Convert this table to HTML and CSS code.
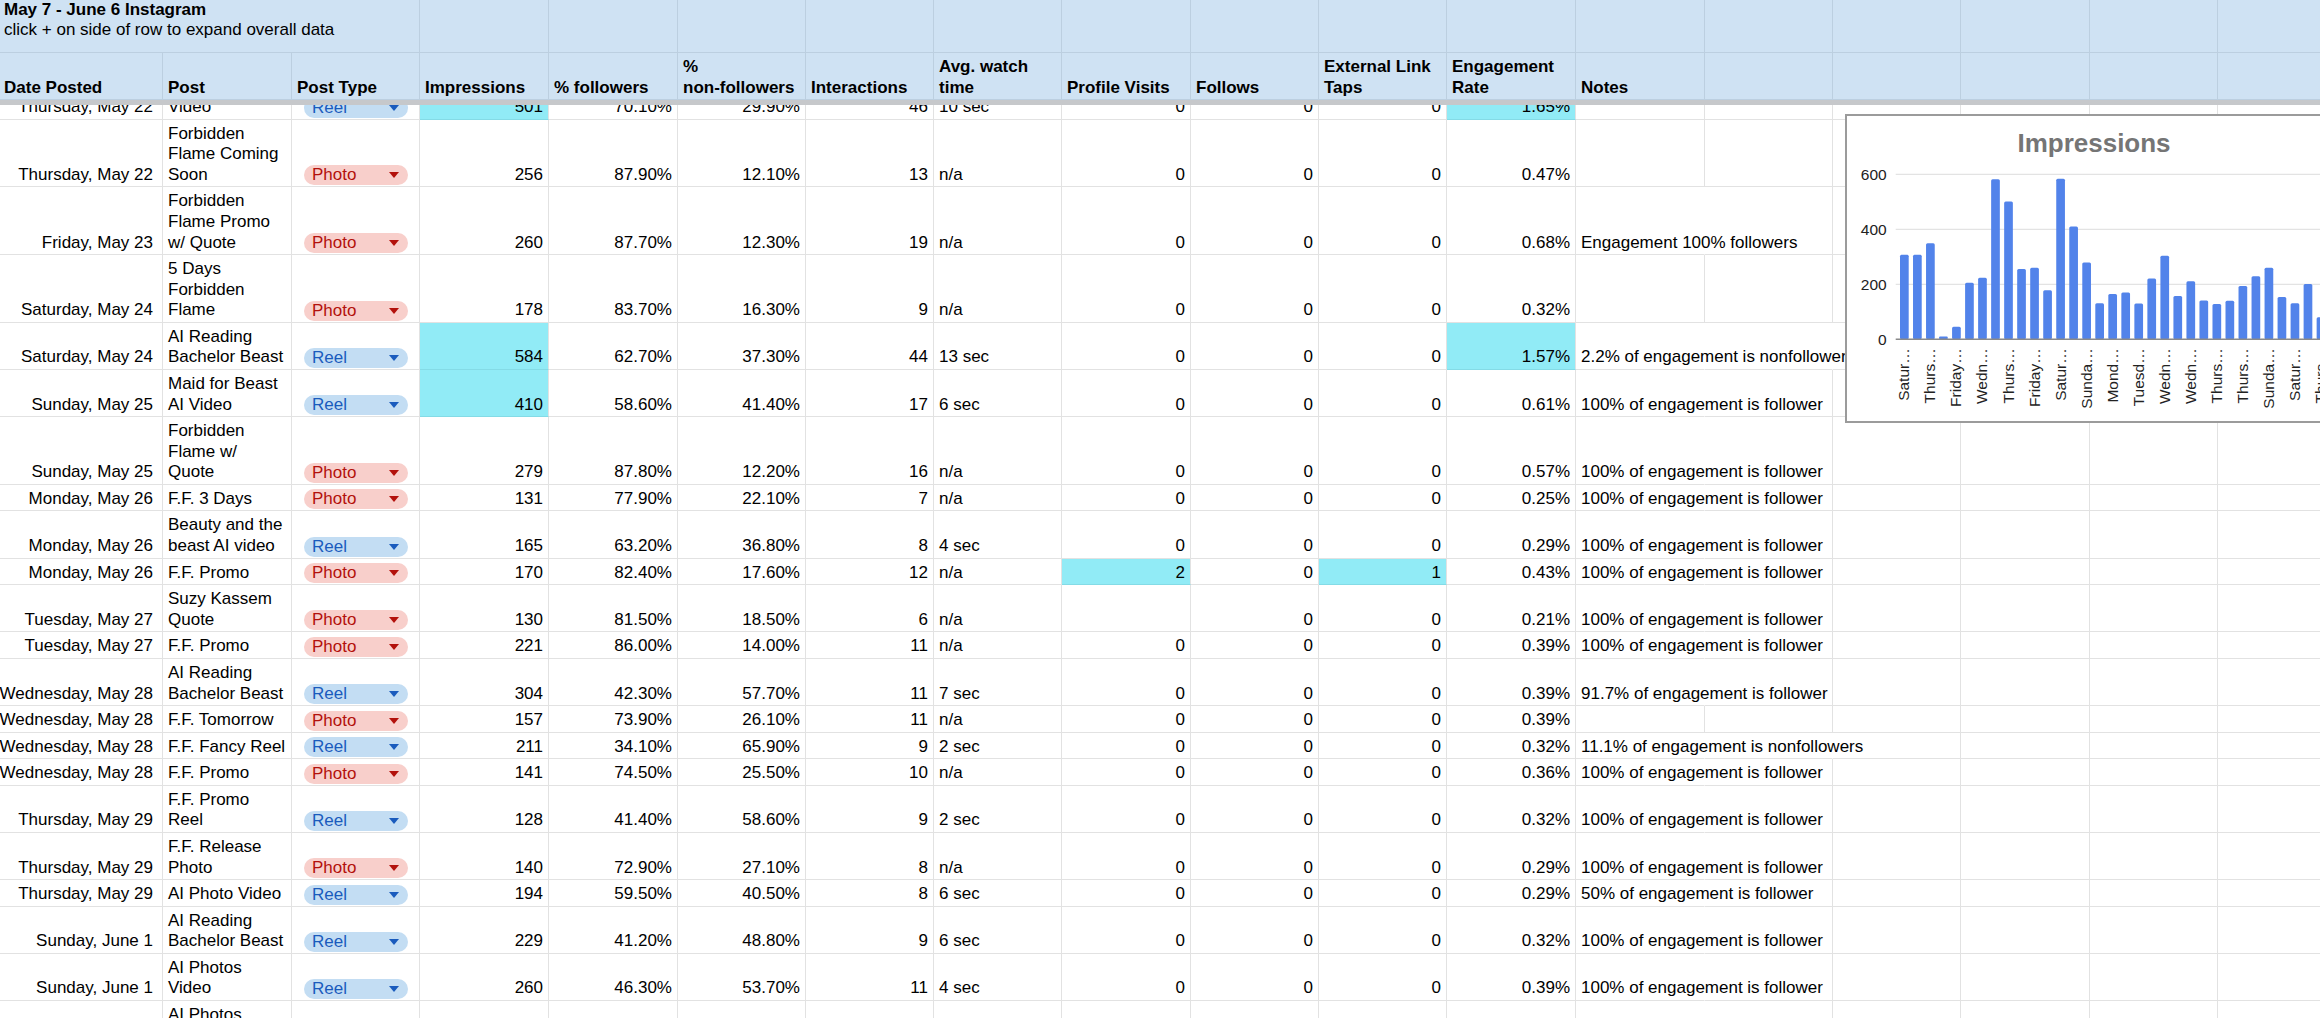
FILE: index.html
```html
<!DOCTYPE html>
<html lang="en">
<head>
<meta charset="utf-8">
<title>May 7 - June 6 Instagram</title>
<link rel="stylesheet" href="styles.css">
</head>
<body>
<div class="sheet">
  <div class="row head top">
    <div class="title"><strong>May 7 - June 6 Instagram</strong><span>click + on side of row to expand overall data</span></div>
    <div></div><div></div><div></div><div></div><div></div><div></div><div></div><div></div><div></div><div></div><div></div><div></div><div></div><div></div><div></div>
  </div>
  <div class="row head labels">
    <div>Date Posted</div><div>Post</div><div>Post Type</div><div>Impressions</div><div>% followers</div><div><span>% <span class="nw">non-followers</span></span></div><div>Interactions</div><div>Avg. watch time</div><div>Profile Visits</div><div>Follows</div><div>External Link Taps</div><div>Engagement Rate</div><div>Notes</div>
    <div></div><div></div><div></div><div></div><div></div>
  </div>
  <div class="freeze"></div>
  <div class="body">
    <div class="rows">
      <div class="row">
        <div class="d">Thursday, May 22</div><div class="t">Bachelor Beast Video</div><div class="p"><span class="pill reel">Reel</span></div>
        <div class="n hl">501</div><div class="n">70.10%</div><div class="n">29.90%</div><div class="n">46</div><div class="t">10 sec</div>
        <div class="n">0</div><div class="n">0</div><div class="n">0</div><div class="n hl">1.65%</div>
        <div></div><div></div><div></div><div></div><div></div><div></div>
      </div>
      <div class="row">
        <div class="d">Thursday, May 22</div><div class="t">Forbidden Flame Coming Soon</div><div class="p"><span class="pill photo">Photo</span></div>
        <div class="n">256</div><div class="n">87.90%</div><div class="n">12.10%</div><div class="n">13</div><div class="t">n/a</div>
        <div class="n">0</div><div class="n">0</div><div class="n">0</div><div class="n">0.47%</div>
        <div></div><div></div><div></div><div></div><div></div><div></div>
      </div>
      <div class="row">
        <div class="d">Friday, May 23</div><div class="t">Forbidden Flame Promo w/ Quote</div><div class="p"><span class="pill photo">Photo</span></div>
        <div class="n">260</div><div class="n">87.70%</div><div class="n">12.30%</div><div class="n">19</div><div class="t">n/a</div>
        <div class="n">0</div><div class="n">0</div><div class="n">0</div><div class="n">0.68%</div>
        <div class="note">Engagement 100% followers</div><div></div><div></div><div></div><div></div><div></div>
      </div>
      <div class="row">
        <div class="d">Saturday, May 24</div><div class="t">5 Days Forbidden Flame</div><div class="p"><span class="pill photo">Photo</span></div>
        <div class="n">178</div><div class="n">83.70%</div><div class="n">16.30%</div><div class="n">9</div><div class="t">n/a</div>
        <div class="n">0</div><div class="n">0</div><div class="n">0</div><div class="n">0.32%</div>
        <div></div><div></div><div></div><div></div><div></div><div></div>
      </div>
      <div class="row">
        <div class="d">Saturday, May 24</div><div class="t">AI Reading Bachelor Beast</div><div class="p"><span class="pill reel">Reel</span></div>
        <div class="n hl">584</div><div class="n">62.70%</div><div class="n">37.30%</div><div class="n">44</div><div class="t">13 sec</div>
        <div class="n">0</div><div class="n">0</div><div class="n">0</div><div class="n hl">1.57%</div>
        <div class="note">2.2% of engagement is nonfollower</div><div class="nb"></div><div></div><div></div><div></div><div></div>
      </div>
      <div class="row">
        <div class="d">Sunday, May 25</div><div class="t">Maid for Beast AI Video</div><div class="p"><span class="pill reel">Reel</span></div>
        <div class="n hl">410</div><div class="n">58.60%</div><div class="n">41.40%</div><div class="n">17</div><div class="t">6 sec</div>
        <div class="n">0</div><div class="n">0</div><div class="n">0</div><div class="n">0.61%</div>
        <div class="note">100% of engagement is follower</div><div></div><div></div><div></div><div></div><div></div>
      </div>
      <div class="row">
        <div class="d">Sunday, May 25</div><div class="t">Forbidden Flame w/ Quote</div><div class="p"><span class="pill photo">Photo</span></div>
        <div class="n">279</div><div class="n">87.80%</div><div class="n">12.20%</div><div class="n">16</div><div class="t">n/a</div>
        <div class="n">0</div><div class="n">0</div><div class="n">0</div><div class="n">0.57%</div>
        <div class="note">100% of engagement is follower</div><div></div><div></div><div></div><div></div><div></div>
      </div>
      <div class="row">
        <div class="d">Monday, May 26</div><div class="t">F.F. 3 Days</div><div class="p"><span class="pill photo">Photo</span></div>
        <div class="n">131</div><div class="n">77.90%</div><div class="n">22.10%</div><div class="n">7</div><div class="t">n/a</div>
        <div class="n">0</div><div class="n">0</div><div class="n">0</div><div class="n">0.25%</div>
        <div class="note">100% of engagement is follower</div><div></div><div></div><div></div><div></div><div></div>
      </div>
      <div class="row">
        <div class="d">Monday, May 26</div><div class="t">Beauty and the beast AI video</div><div class="p"><span class="pill reel">Reel</span></div>
        <div class="n">165</div><div class="n">63.20%</div><div class="n">36.80%</div><div class="n">8</div><div class="t">4 sec</div>
        <div class="n">0</div><div class="n">0</div><div class="n">0</div><div class="n">0.29%</div>
        <div class="note">100% of engagement is follower</div><div></div><div></div><div></div><div></div><div></div>
      </div>
      <div class="row">
        <div class="d">Monday, May 26</div><div class="t">F.F. Promo</div><div class="p"><span class="pill photo">Photo</span></div>
        <div class="n">170</div><div class="n">82.40%</div><div class="n">17.60%</div><div class="n">12</div><div class="t">n/a</div>
        <div class="n hl">2</div><div class="n">0</div><div class="n hl">1</div><div class="n">0.43%</div>
        <div class="note">100% of engagement is follower</div><div></div><div></div><div></div><div></div><div></div>
      </div>
      <div class="row">
        <div class="d">Tuesday, May 27</div><div class="t">Suzy Kassem Quote</div><div class="p"><span class="pill photo">Photo</span></div>
        <div class="n">130</div><div class="n">81.50%</div><div class="n">18.50%</div><div class="n">6</div><div class="t">n/a</div>
        <div class="n"></div><div class="n">0</div><div class="n">0</div><div class="n">0.21%</div>
        <div class="note">100% of engagement is follower</div><div></div><div></div><div></div><div></div><div></div>
      </div>
      <div class="row">
        <div class="d">Tuesday, May 27</div><div class="t">F.F. Promo</div><div class="p"><span class="pill photo">Photo</span></div>
        <div class="n">221</div><div class="n">86.00%</div><div class="n">14.00%</div><div class="n">11</div><div class="t">n/a</div>
        <div class="n">0</div><div class="n">0</div><div class="n">0</div><div class="n">0.39%</div>
        <div class="note">100% of engagement is follower</div><div></div><div></div><div></div><div></div><div></div>
      </div>
      <div class="row">
        <div class="d">Wednesday, May 28</div><div class="t">AI Reading Bachelor Beast</div><div class="p"><span class="pill reel">Reel</span></div>
        <div class="n">304</div><div class="n">42.30%</div><div class="n">57.70%</div><div class="n">11</div><div class="t">7 sec</div>
        <div class="n">0</div><div class="n">0</div><div class="n">0</div><div class="n">0.39%</div>
        <div class="note">91.7% of engagement is follower</div><div></div><div></div><div></div><div></div><div></div>
      </div>
      <div class="row">
        <div class="d">Wednesday, May 28</div><div class="t">F.F. Tomorrow</div><div class="p"><span class="pill photo">Photo</span></div>
        <div class="n">157</div><div class="n">73.90%</div><div class="n">26.10%</div><div class="n">11</div><div class="t">n/a</div>
        <div class="n">0</div><div class="n">0</div><div class="n">0</div><div class="n">0.39%</div>
        <div></div><div></div><div></div><div></div><div></div><div></div>
      </div>
      <div class="row">
        <div class="d">Wednesday, May 28</div><div class="t">F.F. Fancy Reel</div><div class="p"><span class="pill reel">Reel</span></div>
        <div class="n">211</div><div class="n">34.10%</div><div class="n">65.90%</div><div class="n">9</div><div class="t">2 sec</div>
        <div class="n">0</div><div class="n">0</div><div class="n">0</div><div class="n">0.32%</div>
        <div class="note">11.1% of engagement is nonfollowers</div><div class="nb"></div><div></div><div></div><div></div><div></div>
      </div>
      <div class="row">
        <div class="d">Wednesday, May 28</div><div class="t">F.F. Promo</div><div class="p"><span class="pill photo">Photo</span></div>
        <div class="n">141</div><div class="n">74.50%</div><div class="n">25.50%</div><div class="n">10</div><div class="t">n/a</div>
        <div class="n">0</div><div class="n">0</div><div class="n">0</div><div class="n">0.36%</div>
        <div class="note">100% of engagement is follower</div><div></div><div></div><div></div><div></div><div></div>
      </div>
      <div class="row">
        <div class="d">Thursday, May 29</div><div class="t">F.F. Promo Reel</div><div class="p"><span class="pill reel">Reel</span></div>
        <div class="n">128</div><div class="n">41.40%</div><div class="n">58.60%</div><div class="n">9</div><div class="t">2 sec</div>
        <div class="n">0</div><div class="n">0</div><div class="n">0</div><div class="n">0.32%</div>
        <div class="note">100% of engagement is follower</div><div></div><div></div><div></div><div></div><div></div>
      </div>
      <div class="row">
        <div class="d">Thursday, May 29</div><div class="t">F.F. Release Photo</div><div class="p"><span class="pill photo">Photo</span></div>
        <div class="n">140</div><div class="n">72.90%</div><div class="n">27.10%</div><div class="n">8</div><div class="t">n/a</div>
        <div class="n">0</div><div class="n">0</div><div class="n">0</div><div class="n">0.29%</div>
        <div class="note">100% of engagement is follower</div><div></div><div></div><div></div><div></div><div></div>
      </div>
      <div class="row">
        <div class="d">Thursday, May 29</div><div class="t">AI Photo Video</div><div class="p"><span class="pill reel">Reel</span></div>
        <div class="n">194</div><div class="n">59.50%</div><div class="n">40.50%</div><div class="n">8</div><div class="t">6 sec</div>
        <div class="n">0</div><div class="n">0</div><div class="n">0</div><div class="n">0.29%</div>
        <div class="note">50% of engagement is follower</div><div></div><div></div><div></div><div></div><div></div>
      </div>
      <div class="row">
        <div class="d">Sunday, June 1</div><div class="t">AI Reading Bachelor Beast</div><div class="p"><span class="pill reel">Reel</span></div>
        <div class="n">229</div><div class="n">41.20%</div><div class="n">48.80%</div><div class="n">9</div><div class="t">6 sec</div>
        <div class="n">0</div><div class="n">0</div><div class="n">0</div><div class="n">0.32%</div>
        <div class="note">100% of engagement is follower</div><div></div><div></div><div></div><div></div><div></div>
      </div>
      <div class="row">
        <div class="d">Sunday, June 1</div><div class="t">AI Photos Video</div><div class="p"><span class="pill reel">Reel</span></div>
        <div class="n">260</div><div class="n">46.30%</div><div class="n">53.70%</div><div class="n">11</div><div class="t">4 sec</div>
        <div class="n">0</div><div class="n">0</div><div class="n">0</div><div class="n">0.39%</div>
        <div class="note">100% of engagement is follower</div><div></div><div></div><div></div><div></div><div></div>
      </div>
      <div class="row">
        <div class="d">Monday, June 2</div><div class="t">AI Photos Slideshow Reel</div><div class="p"><span class="pill reel">Reel</span></div>
        <div class="n">154</div><div class="n">44.10%</div><div class="n">55.90%</div><div class="n">7</div><div class="t">3 sec</div>
        <div class="n">0</div><div class="n">0</div><div class="n">0</div><div class="n">0.25%</div>
        <div class="note">100% of engagement is follower</div><div></div><div></div><div></div><div></div><div></div>
      </div>
    </div>
  </div>
  <div class="chart">
    <svg width="498" height="309" viewBox="0 0 498 309">
      <rect x="1" y="1" width="496" height="307" fill="#fff" stroke="#9b9b9b" stroke-width="2"/>
      <text class="ct" x="249" y="37.7" text-anchor="middle">Impressions</text>
      <g stroke="#e3e3e3" stroke-width="1.3">
        <line x1="50.7" y1="60.3" x2="498" y2="60.3"/>
        <line x1="50.7" y1="115.3" x2="498" y2="115.3"/>
        <line x1="50.7" y1="170.3" x2="498" y2="170.3"/>
      </g>
      <g class="ax" text-anchor="end">
        <text x="41.7" y="66">600</text>
        <text x="41.7" y="121">400</text>
        <text x="41.7" y="176">200</text>
        <text x="41.7" y="231">0</text>
      </g>
      <g fill="#5283ea">
        <rect x="55.00" y="140.87" width="8.7" height="84.43" rx="1.5"/>
        <rect x="68.02" y="140.87" width="8.7" height="84.43" rx="1.5"/>
        <rect x="81.04" y="129.32" width="8.7" height="95.98" rx="1.5"/>
        <rect x="94.06" y="222.55" width="8.7" height="2.75" rx="1"/>
        <rect x="107.08" y="212.65" width="8.7" height="12.65" rx="1.5"/>
        <rect x="120.10" y="168.65" width="8.7" height="56.65" rx="1.5"/>
        <rect x="133.12" y="163.70" width="8.7" height="61.60" rx="1.5"/>
        <rect x="146.14" y="65.25" width="8.7" height="160.05" rx="1.5"/>
        <rect x="159.16" y="87.52" width="8.7" height="137.78" rx="1.5"/>
        <rect x="172.18" y="154.90" width="8.7" height="70.40" rx="1.5"/>
        <rect x="185.20" y="153.80" width="8.7" height="71.50" rx="1.5"/>
        <rect x="198.22" y="176.35" width="8.7" height="48.95" rx="1.5"/>
        <rect x="211.24" y="64.70" width="8.7" height="160.60" rx="1.5"/>
        <rect x="224.26" y="112.55" width="8.7" height="112.75" rx="1.5"/>
        <rect x="237.28" y="148.57" width="8.7" height="76.73" rx="1.5"/>
        <rect x="250.30" y="189.27" width="8.7" height="36.03" rx="1.5"/>
        <rect x="263.32" y="179.92" width="8.7" height="45.38" rx="1.5"/>
        <rect x="276.34" y="178.55" width="8.7" height="46.75" rx="1.5"/>
        <rect x="289.36" y="189.55" width="8.7" height="35.75" rx="1.5"/>
        <rect x="302.38" y="164.52" width="8.7" height="60.78" rx="1.5"/>
        <rect x="315.40" y="141.70" width="8.7" height="83.60" rx="1.5"/>
        <rect x="328.42" y="182.12" width="8.7" height="43.18" rx="1.5"/>
        <rect x="341.44" y="167.27" width="8.7" height="58.03" rx="1.5"/>
        <rect x="354.46" y="186.52" width="8.7" height="38.78" rx="1.5"/>
        <rect x="367.48" y="190.10" width="8.7" height="35.20" rx="1.5"/>
        <rect x="380.50" y="186.80" width="8.7" height="38.50" rx="1.5"/>
        <rect x="393.52" y="171.95" width="8.7" height="53.35" rx="1.5"/>
        <rect x="406.54" y="162.32" width="8.7" height="62.98" rx="1.5"/>
        <rect x="419.56" y="153.80" width="8.7" height="71.50" rx="1.5"/>
        <rect x="432.58" y="182.95" width="8.7" height="42.35" rx="1.5"/>
        <rect x="445.60" y="189.27" width="8.7" height="36.03" rx="1.5"/>
        <rect x="458.62" y="170.02" width="8.7" height="55.28" rx="1.5"/>
        <rect x="471.64" y="203.30" width="8.7" height="22.00" rx="1.5"/>
        <rect x="484.66" y="184.05" width="8.7" height="41.25" rx="1.5"/>
      </g>
      <line x1="50.7" y1="225.3" x2="498" y2="225.3" stroke="#8a8a8a" stroke-width="1.5"/>
      <g class="ax" text-anchor="end">
        <text x="64.35" y="234.3" transform="rotate(-90 64.35 234.3)">Satur…</text>
        <text x="90.39" y="234.3" transform="rotate(-90 90.39 234.3)">Thurs…</text>
        <text x="116.43" y="234.3" transform="rotate(-90 116.43 234.3)">Friday…</text>
        <text x="142.47" y="234.3" transform="rotate(-90 142.47 234.3)">Wedn…</text>
        <text x="168.51" y="234.3" transform="rotate(-90 168.51 234.3)">Thurs…</text>
        <text x="194.55" y="234.3" transform="rotate(-90 194.55 234.3)">Friday…</text>
        <text x="220.59" y="234.3" transform="rotate(-90 220.59 234.3)">Satur…</text>
        <text x="246.63" y="234.3" transform="rotate(-90 246.63 234.3)">Sunda…</text>
        <text x="272.67" y="234.3" transform="rotate(-90 272.67 234.3)">Mond…</text>
        <text x="298.71" y="234.3" transform="rotate(-90 298.71 234.3)">Tuesd…</text>
        <text x="324.75" y="234.3" transform="rotate(-90 324.75 234.3)">Wedn…</text>
        <text x="350.79" y="234.3" transform="rotate(-90 350.79 234.3)">Wedn…</text>
        <text x="376.83" y="234.3" transform="rotate(-90 376.83 234.3)">Thurs…</text>
        <text x="402.87" y="234.3" transform="rotate(-90 402.87 234.3)">Thurs…</text>
        <text x="428.91" y="234.3" transform="rotate(-90 428.91 234.3)">Sunda…</text>
        <text x="454.95" y="234.3" transform="rotate(-90 454.95 234.3)">Satur…</text>
        <text x="480.99" y="234.3" transform="rotate(-90 480.99 234.3)">Thurs…</text>
      </g>
    </svg>
  </div>
</div>
</body>
</html>
```

FILE: styles.css
```css
* {
  box-sizing: border-box;
}

html,
body {
  margin: 0;
  padding: 0;
  background: #fff;
}

body {
  width: 2320px;
  height: 1018px;
  overflow: hidden;
  font-family: "Liberation Sans", Arial, Helvetica, sans-serif;
  font-size: 17px;
  color: #000;
}

.sheet {
  position: relative;
  width: 2320px;
  height: 1018px;
  overflow: hidden;
}

.row {
  display: grid;
  grid-template-columns: 163px 129px 128px 129px 129px 128px 128px 128px 129px 128px 128px 129px 129px 128px 128px 129px 128px 129px;
  width: 2344px;
}

.row > div {
  display: flex;
  align-items: flex-end;
  min-width: 0;
  padding: 4px 5px 1px 5px;
  line-height: 20.58px;
  border-right: 1px solid #e2e2e2;
  border-bottom: 1px solid #e2e2e2;
}

/* header */
.head {
  background: #cfe2f3;
}

.head > div {
  border-color: #bccfe0;
}

.head.top {
  height: 53px;
}

.head.top > div {
  align-items: flex-start;
  padding: 0 4px;
  line-height: 20px;
}

.head.top > .title {
  grid-column: span 3;
  flex-direction: column;
  white-space: nowrap;
}

.labels > div {
  font-weight: bold;
}

.labels > div:first-child {
  padding-left: 4px;
}

.nw {
  white-space: nowrap;
}

.freeze {
  height: 5px;
  background: #c6c8cb;
}

/* body */
.body {
  height: 913px;
  overflow: hidden;
}

.rows {
  margin-top: -32.66px;
}

.row > .d {
  justify-content: flex-end;
  padding-left: 0;
  padding-right: 9px;
  white-space: nowrap;
}

.row > .n {
  justify-content: flex-end;
}

.row > .note {
  white-space: nowrap;
  border-right-color: transparent;
}

.row > .nb {
  border-right-color: transparent;
}

.row > .hl {
  background: #91ebf6;
  border-bottom-color: #84dbe6;
}

.row > .p {
  padding: 0 0 1px 12px;
}

.pill {
  display: flex;
  align-items: center;
  justify-content: space-between;
  width: 104px;
  height: 20px;
  padding: 0 9px 0 8px;
  border-radius: 10px;
  line-height: 20px;
  white-space: nowrap;
}

.pill::after {
  content: "";
  width: 0;
  height: 0;
  border-left: 5px solid transparent;
  border-right: 5px solid transparent;
  border-top: 6px solid currentColor;
}

.reel {
  background: #c3ddf3;
  color: #1a5bbd;
}

.photo {
  background: #f8cfcb;
  color: #b3110c;
}

/* chart */
.chart {
  position: absolute;
  left: 1845px;
  top: 114px;
  width: 498px;
  height: 309px;
}

.chart svg {
  display: block;
}

.chart text {
  font-family: "Liberation Sans", Arial, Helvetica, sans-serif;
}

.ct {
  font-size: 26px;
  font-weight: bold;
  fill: #757575;
}

.ax {
  font-size: 15.5px;
  fill: #222;
}
```
